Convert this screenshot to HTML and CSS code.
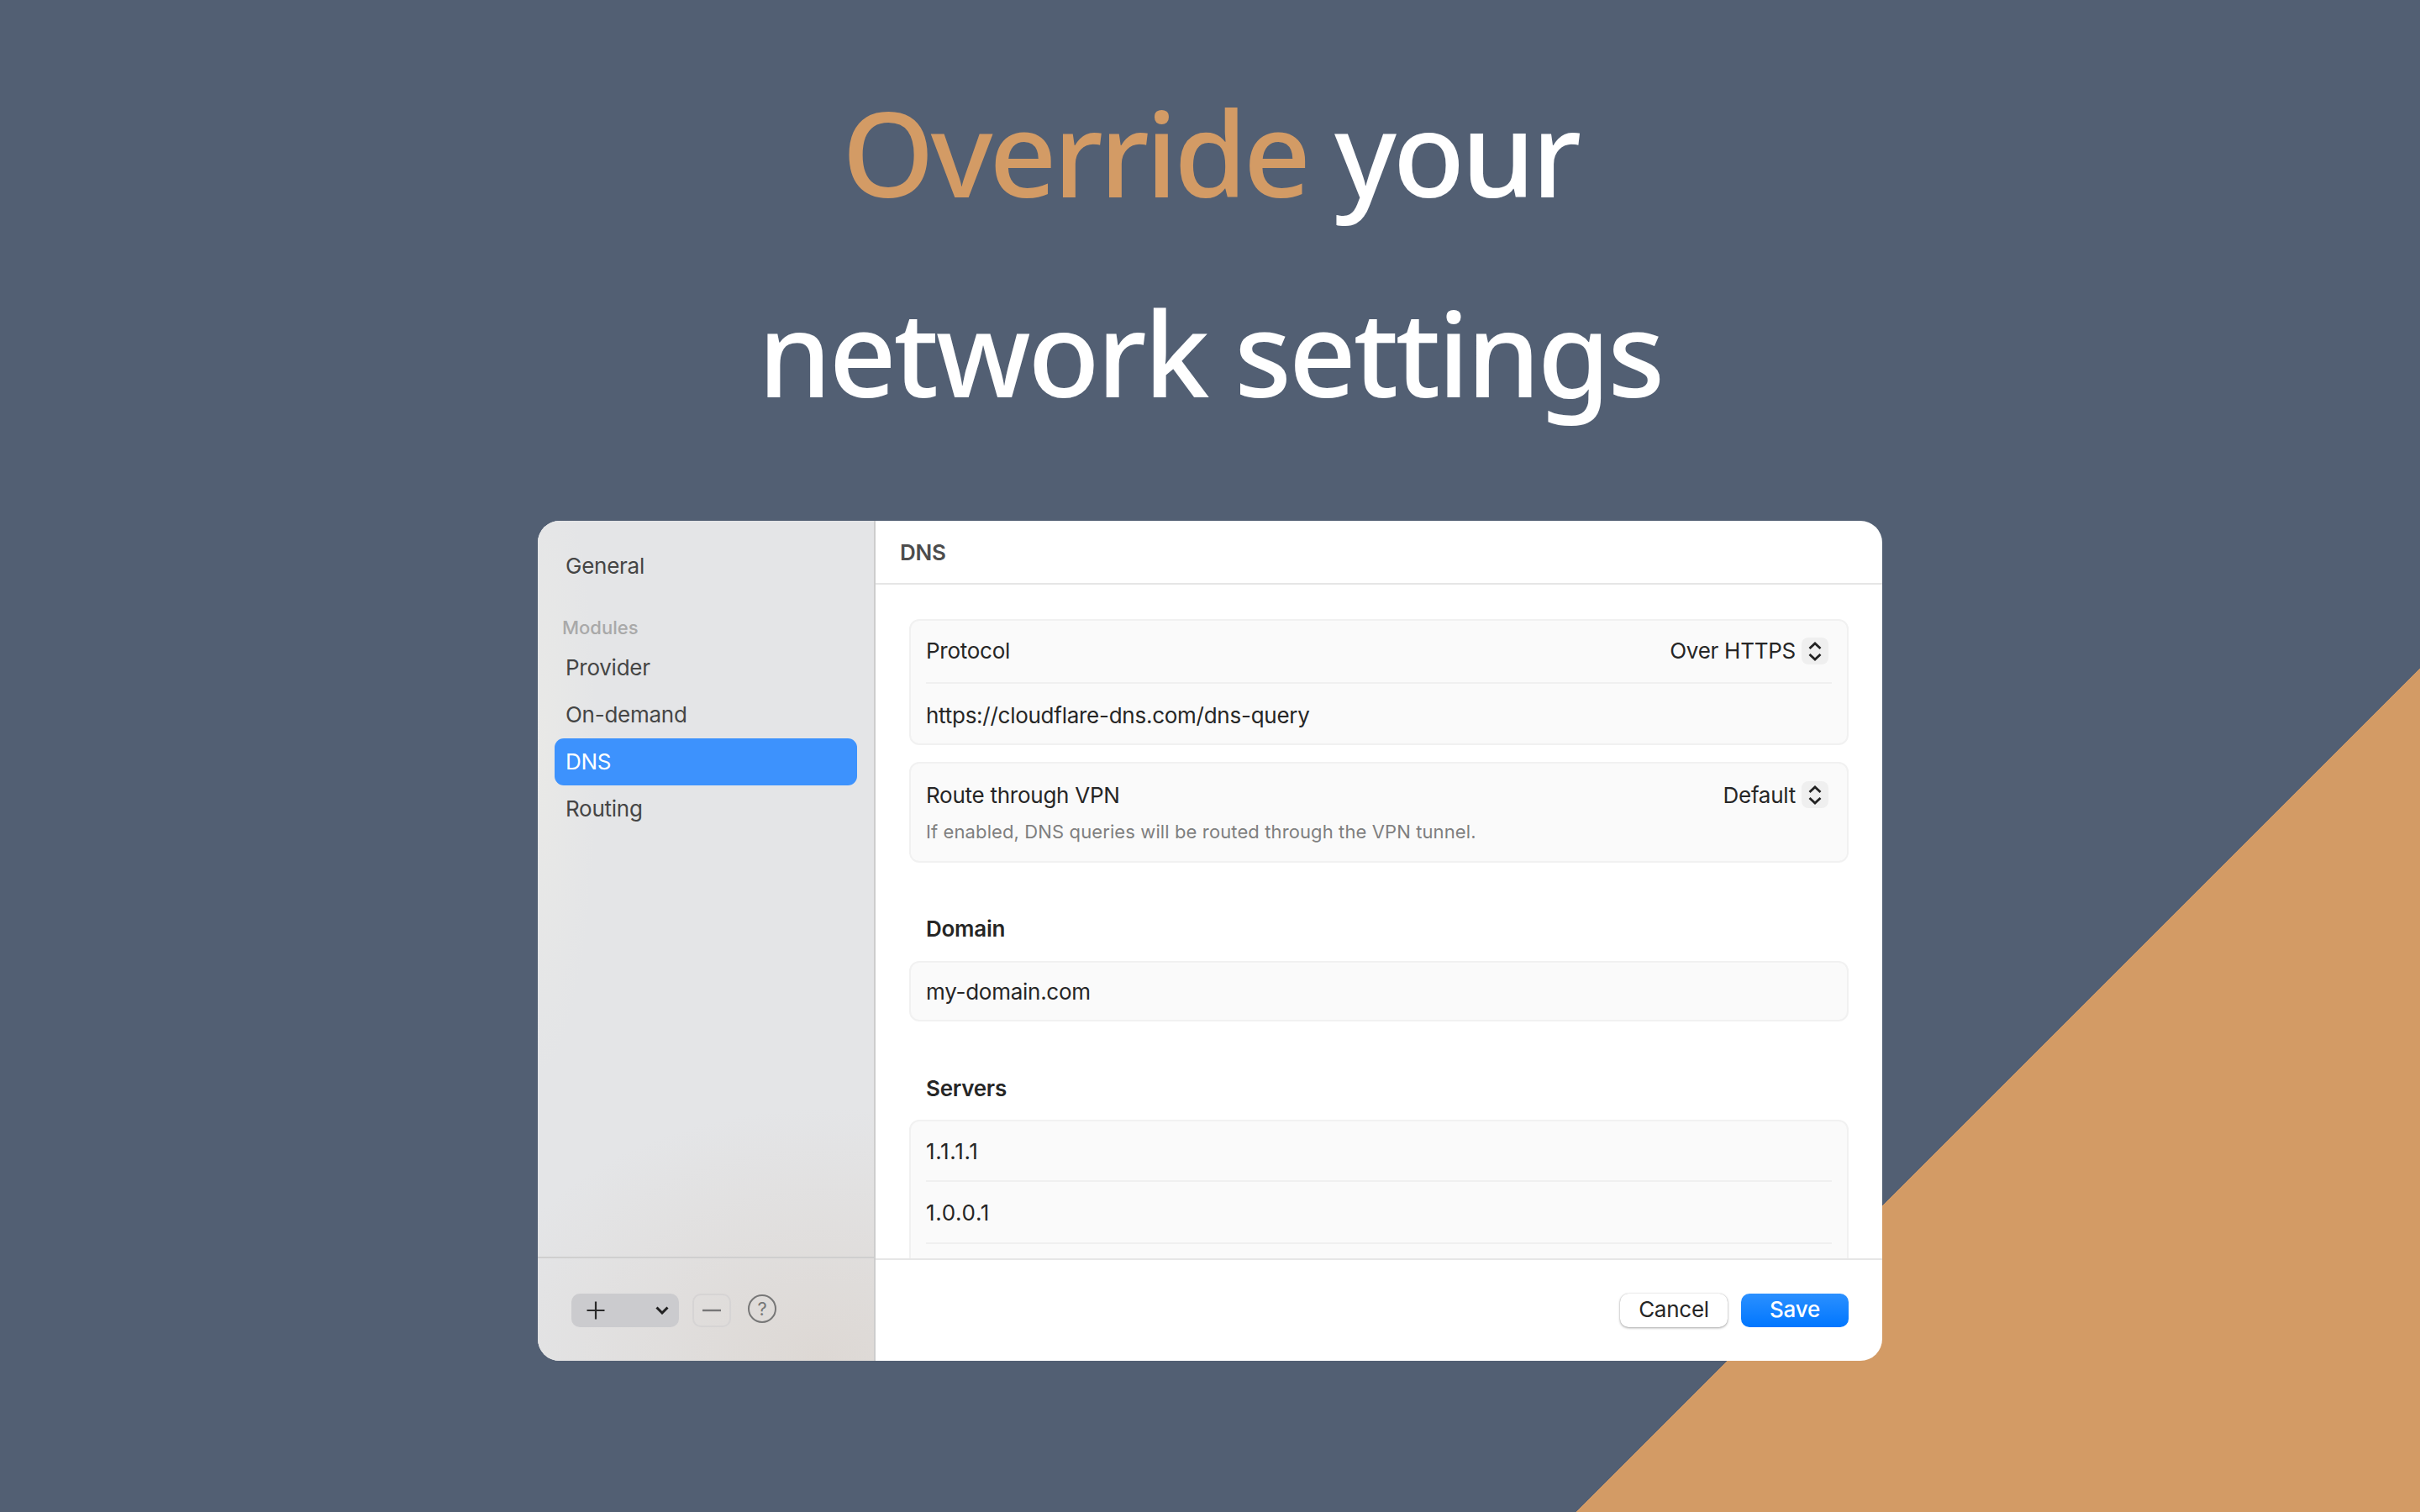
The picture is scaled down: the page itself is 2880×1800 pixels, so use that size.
FILE: index.html
```html
<!DOCTYPE html>
<html lang="en">
<head>
<meta charset="utf-8">
<title>Override your network settings</title>
<link rel="stylesheet" href="styles.css">
</head>
<body>
<div class="stage">
  <h1 class="hero"><span class="line-one"><span class="accent">Override</span> your</span><br><span class="line-two">network settings</span></h1>
  <div class="window">
    <aside class="sidebar">
      <nav class="nav">
        <div class="nav-item">General</div>
        <div class="nav-label">Modules</div>
        <div class="nav-item">Provider</div>
        <div class="nav-item">On-demand</div>
        <div class="nav-item selected">DNS</div>
        <div class="nav-item">Routing</div>
      </nav>
      <div class="side-foot">
        <div class="add-btn">
          <svg width="24" height="24" viewBox="0 0 24 24"><path d="M12 1.500V22.500M1.500 12H22.500" stroke="#2a2a2a" stroke-width="2.200" fill="none"/></svg>
          <svg width="16" height="10" viewBox="0 0 16 10"><path d="M1.500 1.500L8 8L14.500 1.500" stroke="#222" stroke-width="3" fill="none"/></svg>
        </div>
        <div class="remove-btn">
          <svg width="22" height="4" viewBox="0 0 22 4"><path d="M0 2H22" stroke="#777" stroke-width="2.400" fill="none"/></svg>
        </div>
        <div class="help-btn">?</div>
      </div>
    </aside>
    <main class="main">
      <header class="main-head">DNS</header>
      <div class="content">
        <section class="card">
          <div class="row row-a">
            <span>Protocol</span>
            <span class="select">Over HTTPS
              <svg class="stepper" width="32" height="32" viewBox="0 0 32 32"><path d="M9.500 13L16 7L22.500 13M9.500 20L16 26L22.500 20" stroke="#222" stroke-width="2.800" fill="none"/></svg>
            </span>
          </div>
          <div class="row row-b"><span>https://cloudflare-dns.com/dns-query</span></div>
        </section>
        <section class="card card-next">
          <div class="row row-c">
            <span>Route through VPN</span>
            <span class="select">Default
              <svg class="stepper" width="32" height="32" viewBox="0 0 32 32"><path d="M9.500 13L16 7L22.500 13M9.500 20L16 26L22.500 20" stroke="#222" stroke-width="2.800" fill="none"/></svg>
            </span>
          </div>
          <p class="hint">If enabled, DNS queries will be routed through the VPN tunnel.</p>
        </section>
        <h2 class="group">Domain</h2>
        <section class="card">
          <div class="row row-d"><span>my-domain.com</span></div>
        </section>
        <h2 class="group group-servers">Servers</h2>
        <section class="card">
          <div class="row row-s"><span>1.1.1.1</span></div>
          <div class="row row-s"><span>1.0.0.1</span></div>
          <div class="row row-s"></div>
        </section>
      </div>
      <footer class="main-foot">
        <button class="btn btn-cancel">Cancel</button>
        <button class="btn btn-save">Save</button>
      </footer>
    </main>
  </div>
</div>
</body>
</html>
```
FILE: styles.css
```css
* { box-sizing: border-box; }
html, body { margin: 0; padding: 0; }
body {
  width: 2880px;
  height: 1800px;
  overflow: hidden;
  font-family: Inter, "Liberation Sans", sans-serif;
  color: #262626;
  letter-spacing: -0.26px;
}
.stage {
  width: 2880px;
  height: 1800px;
  display: flex;
  flex-direction: column;
  align-items: center;
  background: linear-gradient(135deg, #525f73 78.526%, #d39b65 78.526%);
}
.hero {
  margin: 0;
  height: 620px;
  padding-top: 62px;
  font-family: "Noto Sans", sans-serif;
  font-weight: 500;
  font-size: 140px;
  line-height: 238px;
  text-align: center;
  color: #ffffff;
}
.line-one { letter-spacing: -4.200px; }
.line-two { letter-spacing: -3.400px; }
.accent { color: #d39b65; }
.window {
  width: 1600px;
  height: 1000px;
  display: flex;
  border-radius: 26px;
  overflow: hidden;
  background: #fff;
}
.sidebar {
  width: 402px;
  display: flex;
  flex-direction: column;
  border-right: 2px solid #cdcdcd;
  background:
    radial-gradient(420px 300px at 85% 100%, #ddd8d4 0%, rgba(222,217,213,0) 100%),
    radial-gradient(70px 380px at 0% 28%, #e9e9e7 0%, rgba(233,233,231,0) 100%),
    #e4e5e7;
}
.nav {
  flex: 1;
  padding: 26px 20px 0;
  font-size: 26px;
}
.nav-item {
  height: 56px;
  padding: 0 0 1px 13px;
  display: flex;
  align-items: center;
  border-radius: 11px;
  color: #454545;
}
.nav-item.selected {
  background: #3d92fd;
  color: #fff;
}
.nav-label {
  margin: 30px 0 5px;
  height: 30px;
  padding-left: 9px;
  display: flex;
  align-items: center;
  font-size: 22px;
  font-weight: 500;
  letter-spacing: 0;
  color: #a9a9a9;
}
.side-foot {
  height: 124px;
  padding: 42px 0 0 40px;
  display: flex;
  align-items: flex-start;
  border-top: 2px solid #cfcfcf;
}
.add-btn {
  width: 128px;
  height: 40px;
  padding: 0 12px 0 17px;
  display: flex;
  align-items: center;
  justify-content: space-between;
  border-radius: 10px;
  background: #cbcbce;
}
.remove-btn {
  width: 46px;
  height: 40px;
  margin-left: 16px;
  display: flex;
  align-items: center;
  justify-content: center;
  border: 2px solid #d6d4d4;
  border-radius: 10px;
}
.help-btn {
  width: 34px;
  height: 34px;
  margin: 1px 0 0 20px;
  display: flex;
  align-items: center;
  justify-content: center;
  border: 2px solid #777;
  border-radius: 50%;
  font-size: 22px;
  color: #777;
}
.main {
  flex: 1;
  min-width: 0;
  display: flex;
  flex-direction: column;
}
.main-head {
  height: 76px;
  padding: 1px 0 0 29px;
  display: flex;
  align-items: center;
  border-bottom: 2px solid #e6e6e6;
  font-size: 26px;
  font-weight: 600;
  color: #4d4d4d;
}
.content {
  flex: 1;
  min-height: 0;
  overflow: hidden;
  padding: 41px 40px 0;
  font-size: 26px;
}
.main-foot {
  height: 122px;
  padding: 40px 40px 0 0;
  display: flex;
  justify-content: flex-end;
  align-items: flex-start;
  gap: 16px;
  border-top: 2px solid #e6e6e6;
}
.card {
  padding: 0 18px;
  background: #fafafa;
  border: 2px solid #f1f1f1;
  border-radius: 12px;
}
.card-next { margin-top: 20px; }
.row {
  display: flex;
  align-items: center;
  justify-content: space-between;
}
.row-a { height: 75px; padding-bottom: 2px; border-bottom: 2px solid #f0f0f0; }
.row-b { height: 71px; padding-top: 3px; }
.row-c { height: 66px; padding-top: 8px; }
.row-d { height: 68px; }
.row-s { height: 74px; border-bottom: 2px solid #f0f0f0; letter-spacing: 0.650px; }
.row-s:first-child { height: 72px; }
.select {
  display: flex;
  align-items: center;
  gap: 7px;
  margin-right: 4px;
}
.stepper {
  background: #efefef;
  border-radius: 8px;
}
.hint {
  margin: 0;
  padding-bottom: 20px;
  font-size: 22px;
  line-height: 30px;
  letter-spacing: 0.110px;
  color: #7f7f7f;
}
.group {
  margin: 61px 0 20px 20px;
  height: 36px;
  line-height: 36px;
  font-size: 26px;
  font-weight: 600;
  color: #262626;
}
.group-servers { margin: 62px 0 19px 20px; }
.btn {
  width: 128px;
  height: 40px;
  padding: 0 0 3px;
  border: 0;
  border-radius: 10px;
  font-family: inherit;
  font-size: 26px;
  letter-spacing: -0.26px;
}
.btn-cancel {
  background: #fff;
  color: #262626;
  box-shadow: 0 1px 3px rgba(0, 0, 0, .35), 0 0 1px rgba(0, 0, 0, .25);
}
.btn-save {
  background: linear-gradient(180deg, #2b90ff, #0076ff);
  color: #fff;
  font-weight: 500;
}
```
